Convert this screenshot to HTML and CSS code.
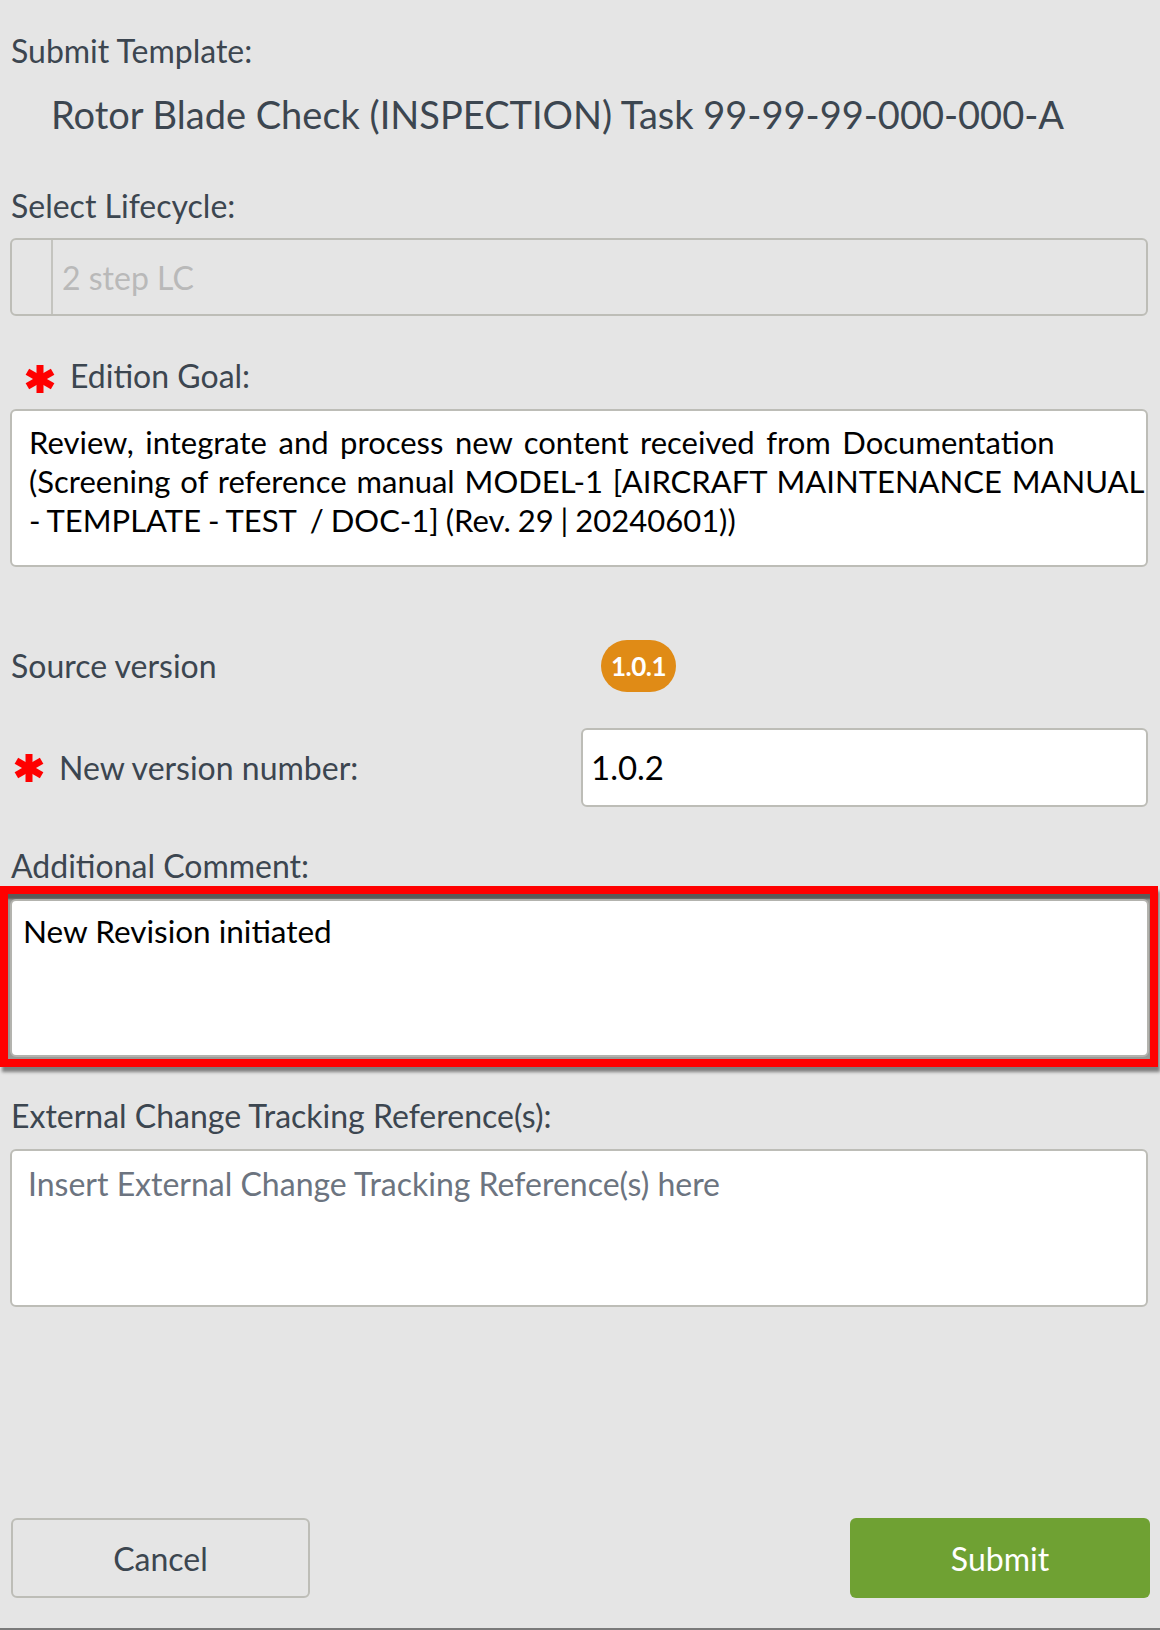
FILE: index.html
```html
<!DOCTYPE html>
<html lang="en">
<head>
<meta charset="utf-8">
<title>Submit Template</title>
<link rel="stylesheet" href="styles.css">
</head>
<body>
<div class="page">
  <div class="label first">Submit Template:</div>
  <div class="title">Rotor Blade Check (INSPECTION) Task 99-99-99-000-000-A</div>

  <div class="label gap-lc">Select Lifecycle:</div>
  <div class="select">
    <div class="select-cell"></div>
    <div class="select-value">2 step LC</div>
  </div>

  <div class="label req-row goal-row">
    <svg class="star" viewBox="0 0 32 30" aria-hidden="true"><g stroke="#ff0000" stroke-width="7"><line x1="16" y1="1" x2="16" y2="29"/><line x1="3.4" y1="7.7" x2="28.6" y2="22.3"/><line x1="3.4" y1="22.3" x2="28.6" y2="7.7"/></g></svg>
    <span>Edition Goal:</span>
  </div>
  <div class="field area goal"><span class="ln ln-wide">Review, integrate and process new content received from Documentation</span><span class="ln">(Screening of reference manual MODEL-1 [AIRCRAFT MAINTENANCE MANUAL</span><span class="ln ln-tight">- TEMPLATE - TEST  / DOC-1] (Rev. 29 | 20240601))</span></div>

  <div class="row source-row">
    <div class="label row-label">Source version</div>
    <div class="badge">1.0.1</div>
  </div>

  <div class="row version-row">
    <div class="label req-row ver-label">
      <svg class="star" viewBox="0 0 32 30" aria-hidden="true"><g stroke="#ff0000" stroke-width="7"><line x1="16" y1="1" x2="16" y2="29"/><line x1="3.4" y1="7.7" x2="28.6" y2="22.3"/><line x1="3.4" y1="22.3" x2="28.6" y2="7.7"/></g></svg>
      <span>New version number:</span>
    </div>
    <div class="field input">1.0.2</div>
  </div>

  <div class="label gap-comment">Additional Comment:</div>
  <div class="highlight">
    <div class="field area comment">New Revision initiated</div>
  </div>

  <div class="label gap-ext">External Change Tracking Reference(s):</div>
  <div class="field area ext"><span class="placeholder">Insert External Change Tracking Reference(s) here</span></div>

  <div class="actions">
    <button class="btn cancel" type="button">Cancel</button>
    <button class="btn submit" type="button">Submit</button>
  </div>
</div>
<div class="bottom-line"></div>
</body>
</html>
```

FILE: styles.css
```css
html, body {
  margin: 0;
  padding: 0;
  background: #e5e5e5;
}
body {
  width: 1160px;
  height: 1630px;
  overflow: hidden;
  font-family: Lato, "Open Sans", sans-serif;
  color: #3c4650;
}
.page {
  padding: 33px 12px 0 10px;
  height: 1598px;
  box-sizing: border-box;
}
.label {
  font-size: 32px;
  line-height: 36px;
  color: #3c4650;
  white-space: nowrap;
}
.first { margin-left: 1px; }
.title {
  margin: 23px 0 0 41px;
  font-size: 38px;
  line-height: 44px;
  color: #3c4650;
  white-space: nowrap;
}
.gap-lc { margin-top: 52px; margin-left: 1px; }
.select {
  margin-top: 14px;
  height: 78px;
  box-sizing: border-box;
  border: 2px solid #bdbdb7;
  border-radius: 6px;
  display: flex;
  align-items: stretch;
}
.select-cell {
  width: 39px;
  border-right: 2px solid #c4c4bf;
}
.select-value {
  display: flex;
  align-items: center;
  padding-left: 9px;
  font-size: 32px;
  color: #b9b9b9;
}
.req-row {
  display: flex;
  align-items: center;
}
.star {
  width: 32px;
  height: 30px;
  flex: none;
}
.goal-row {
  margin-top: 42px;
  padding-left: 14px;
  gap: 14px;
}
.goal-row .star { margin-top: 5px; }
.field {
  background: #ffffff;
  border: 2px solid #bdbdb7;
  border-radius: 6px;
  box-sizing: border-box;
  color: #000000;
  font-size: 31.5px;
  line-height: 39px;
}
.area { height: 158px; }
.goal {
  margin-top: 15px;
  padding: 12px 0 0 17px;
  font-size: 31px;
  word-spacing: 2px;
}
.ln {
  display: block;
  white-space: pre;
}
.ln-wide { word-spacing: 3.6px; }
.ln-tight { word-spacing: -1px; }
.row {
  display: flex;
  align-items: center;
}
.source-row {
  margin-top: 73px;
  height: 52px;
}
.row-label {
  width: 590px;
  margin-left: 1px;
}
.badge {
  height: 52px;
  padding: 0 10px;
  border-radius: 26px;
  background: #e08b16;
  color: #ffffff;
  font-weight: 700;
  font-size: 26px;
  line-height: 52px;
  letter-spacing: -0.5px;
}
.version-row {
  margin-top: 36px;
  height: 79px;
}
.ver-label {
  width: 571px;
  padding-left: 3px;
  gap: 14px;
  box-sizing: border-box;
}
.input {
  flex: 1;
  height: 79px;
  padding-left: 8px;
  display: flex;
  align-items: center;
  font-size: 33px;
}
.gap-comment { margin-top: 41px; margin-left: 1px; }
.highlight {
  margin: 2px -10px 0 -10px;
  border: 8px solid #ff0000;
  padding: 5px 1px 2px 2px;
  background: #9a9a96;
  box-shadow: inset 0 6px 2px -1px #5a5a58, 2px 5px 3px rgba(0, 0, 0, 0.45);
}
.comment {
  padding: 11px 0 0 11px;
  border-color: #b3b3ae;
}
.gap-ext { margin-top: 31px; margin-left: 1px; }
.ext {
  margin-top: 15px;
  padding: 13px 0 0 16px;
  font-size: 32px;
}
.placeholder { color: #6c7480; }
.actions {
  margin-top: 211px;
  display: flex;
  justify-content: space-between;
  padding-left: 1px;
}
.btn {
  width: 299px;
  height: 80px;
  border-radius: 6px;
  font-family: Lato, "Open Sans", sans-serif;
  font-size: 32px;
  cursor: pointer;
}
.cancel {
  background: transparent;
  border: 2px solid #bdbdb7;
  color: #3c4650;
}
.submit {
  width: 300px;
  margin-right: -2px;
  background: #6fa133;
  border: none;
  color: #ffffff;
}
.bottom-line {
  margin-top: 30px;
  height: 2px;
  background: #7a7a7a;
}
```
